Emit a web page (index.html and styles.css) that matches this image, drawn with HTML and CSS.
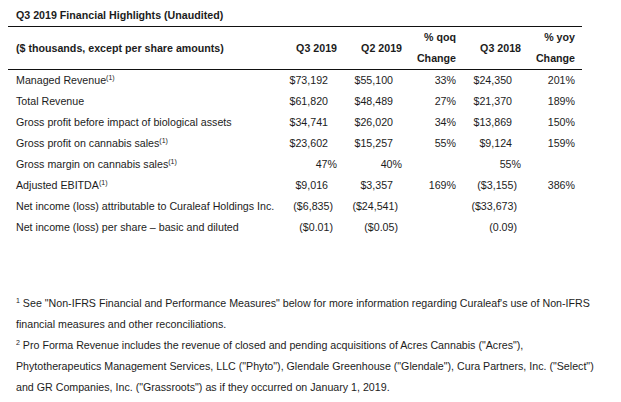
FILE: index.html
```html
<!DOCTYPE html>
<html>
<head>
<meta charset="utf-8">
<link rel="stylesheet" href="styles.css">
</head>
<body>
<div class="page">
  <div class="title">Q3 2019 Financial Highlights (Unaudited)</div>
  <table class="fin">
    <colgroup>
      <col class="c-label"><col class="c-q3"><col class="c-q2"><col class="c-qoq"><col class="c-q318"><col class="c-yoy">
    </colgroup>
    <thead>
      <tr>
        <th class="label">($ thousands, except per share amounts)</th>
        <th class="h">Q3 2019</th>
        <th class="h">Q2 2019</th>
        <th class="chg">% qoq<br>Change</th>
        <th class="h">Q3 2018</th>
        <th class="chg yoy">% yoy<br>Change</th>
      </tr>
    </thead>
    <tbody>
      <tr><td class="label">Managed Revenue<span class="sup">(1)</span></td><td class="pos">$73,192</td><td class="pos">$55,100</td><td class="chg">33%</td><td class="pos">$24,350</td><td class="chg yoy">201%</td></tr>
      <tr><td class="label">Total Revenue</td><td class="pos">$61,820</td><td class="pos">$48,489</td><td class="chg">27%</td><td class="pos">$21,370</td><td class="chg yoy">189%</td></tr>
      <tr><td class="label">Gross profit before impact of biological assets</td><td class="pos">$34,741</td><td class="pos">$26,020</td><td class="chg">34%</td><td class="pos">$13,869</td><td class="chg yoy">150%</td></tr>
      <tr><td class="label">Gross profit on cannabis sales<span class="sup">(1)</span></td><td class="pos">$23,602</td><td class="pos">$15,257</td><td class="chg">55%</td><td class="pos">$9,124</td><td class="chg yoy">159%</td></tr>
      <tr><td class="label">Gross margin on cannabis sales<span class="sup">(1)</span></td><td class="h">47%</td><td class="h">40%</td><td class="chg"></td><td class="h">55%</td><td class="chg yoy"></td></tr>
      <tr><td class="label">Adjusted EBITDA<span class="sup">(1)</span></td><td class="pos">$9,016</td><td class="pos">$3,357</td><td class="chg">169%</td><td class="neg">($3,155)</td><td class="chg yoy">386%</td></tr>
      <tr><td class="label">Net income (loss) attributable to Curaleaf Holdings Inc.</td><td class="neg">($6,835)</td><td class="neg">($24,541)</td><td class="chg"></td><td class="neg">($33,673)</td><td class="chg yoy"></td></tr>
      <tr><td class="label">Net income (loss) per share – basic and diluted</td><td class="neg">($0.01)</td><td class="neg">($0.05)</td><td class="chg"></td><td class="neg">(0.09)</td><td class="chg yoy"></td></tr>
    </tbody>
  </table>
  <div class="notes">
    <p><span class="fsup">1</span> See "Non-IFRS Financial and Performance Measures" below for more information regarding Curaleaf's use of Non-IFRS<br>financial measures and other reconciliations.</p>
    <p><span class="fsup">2</span> Pro Forma Revenue includes the revenue of closed and pending acquisitions of Acres Cannabis ("Acres"),<br>Phytotherapeutics Management Services, LLC ("Phyto"), Glendale Greenhouse ("Glendale"), Cura Partners, Inc. ("Select")<br>and GR Companies, Inc. ("Grassroots") as if they occurred on January 1, 2019.</p>
  </div>
</div>
</body>
</html>
```

FILE: styles.css
```css
html, body {
  margin: 0;
  padding: 0;
  background: #ffffff;
}
body {
  font-family: "Liberation Sans", Arial, sans-serif;
  font-size: 10.67px;
  color: #1c1c1c;
}
.page {
  padding: 5px 0 0 8px;
}
.title {
  font-weight: bold;
  line-height: 21px;
  padding-left: 8px;
}
.fin {
  width: 574px;
  table-layout: fixed;
  border-collapse: collapse;
  border-top: 1px solid #111;
}
.c-label { width: 272px; }
.c-q3 { width: 60px; }
.c-q2 { width: 65px; }
.c-qoq { width: 55px; }
.c-q318 { width: 64px; }
.c-yoy { width: 58px; }
.fin th {
  font-weight: bold;
  line-height: 21px;
  border-bottom: 1px solid #111;
  padding: 0;
  vertical-align: middle;
}
.fin td {
  line-height: 21px;
  padding: 0;
  white-space: nowrap;
}
.fin .label {
  text-align: left;
  padding-left: 8px;
}
.fin .h {
  text-align: right;
  padding-right: 3px;
}
.fin .pos {
  text-align: right;
  padding-right: 12px;
}
.fin .neg {
  text-align: right;
  padding-right: 7px;
}
.fin .chg {
  text-align: right;
  padding-right: 4px;
}
.fin .chg.yoy {
  padding-right: 7px;
}
.sup {
  font-size: 7px;
  vertical-align: 4px;
  line-height: 0;
}
.notes {
  margin-top: 55px;
  padding-left: 8px;
  white-space: nowrap;
}
.notes p {
  margin: 0;
  line-height: 21px;
}
.fsup {
  font-size: 7px;
  vertical-align: 4px;
  line-height: 0;
}
```
